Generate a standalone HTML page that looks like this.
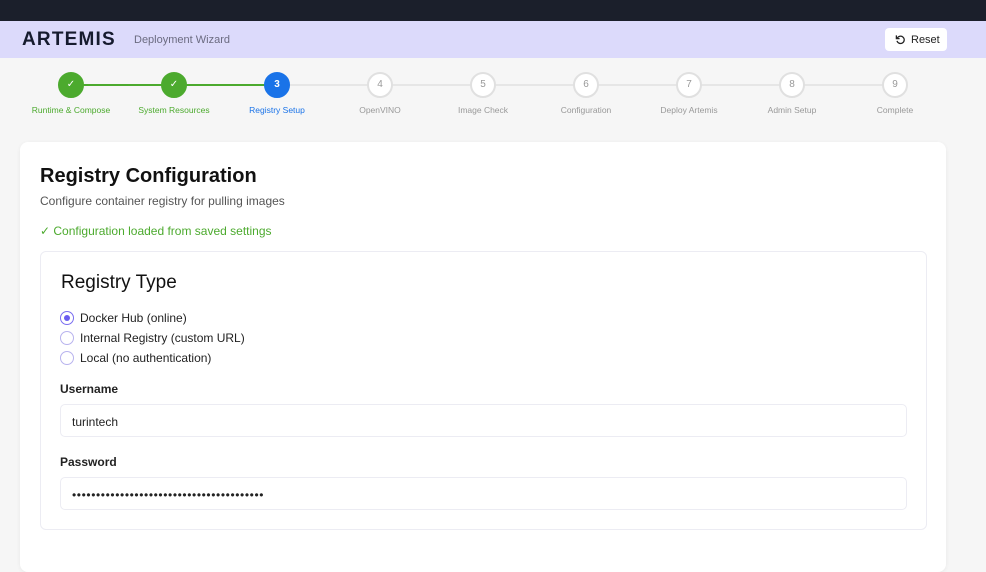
<!DOCTYPE html>
<html><head><style>
*{box-sizing:border-box;margin:0;padding:0}
body{width:986px;height:556px;overflow:hidden;background:#f6f6f6;font-family:"Liberation Sans",sans-serif;position:relative}
.top{position:absolute;left:0;top:0;width:986px;height:21px;background:#1b1f2b}
.hdr{position:absolute;left:0;top:21px;width:986px;height:37px;background:#dcdafb}
.logo{position:absolute;left:22px;top:8px;font-size:19px;font-weight:bold;letter-spacing:1.2px;color:#161b2e}
.sub{position:absolute;left:134px;top:13px;font-size:11px;color:#6b6b80}
.reset{position:absolute;left:885px;top:7px;width:62px;height:23px;background:#fff;border-radius:4px;font-size:11px;color:#222;padding:6px 0 0 26px}
.reset svg{position:absolute;left:10px;top:6px}
.line{position:absolute;top:84px;height:2px}
.c{position:absolute;top:72px;width:26px;height:26px;border-radius:50%;font-size:10px;text-align:center;line-height:22px;border:2px solid #e0e0e0;background:#fff;color:#999}
.c.g{background:#4caa2e;border-color:#4caa2e;color:#fff}
.c.b{background:#1a73e8;border-color:#1a73e8;color:#fff;font-weight:bold}
.l{position:absolute;top:105px;width:110px;margin-left:-55px;text-align:center;font-size:8.5px;color:#999}
.card{position:absolute;left:20px;top:142px;width:926px;height:430px;background:#fff;border-radius:8px;box-shadow:0 1px 4px rgba(0,0,0,.06)}
h1{position:absolute;left:40px;top:165px;font-size:20px;color:#111;font-weight:bold}
.p{position:absolute;left:40px;top:194px;font-size:12px;color:#555}
.ok{position:absolute;left:40px;top:224px;font-size:12px;color:#4caa2e}
.box{position:absolute;left:40px;top:251px;width:887px;height:279px;border:1px solid #ececf3;border-radius:6px}
h2{position:absolute;left:61px;top:272px;font-size:19px;font-weight:normal;color:#111}
.r{position:absolute;left:60px;font-size:12px;color:#222}
.r i{position:absolute;left:0;top:0;width:14px;height:14px;border:1.5px solid #b8b3ee;border-radius:50%}
.r i.on{border-color:#7a6ef0}
.r i.on:after{content:"";position:absolute;left:2.5px;top:2.5px;width:6px;height:6px;border-radius:50%;background:#6a5cf0}
.r span{position:absolute;left:20px;top:0;white-space:nowrap}
.lab{position:absolute;left:60px;font-size:12px;font-weight:bold;color:#222}
.in{position:absolute;left:60px;width:847px;height:33px;border:1px solid #ececf3;border-radius:5px;font-size:12px;color:#222;padding:10px 0 0 11px}
</style></head><body>
<div class="top"></div>
<div class="hdr"><div class="logo">ARTEMIS</div><div class="sub">Deployment Wizard</div>
<div class="reset"><svg width="11" height="11" viewBox="0 0 12 12"><path d="M2.5 4.5A4 4 0 1 1 2.2 7.5" fill="none" stroke="#222" stroke-width="1.4"/><path d="M1.5 1.5v3.5h3.5" fill="none" stroke="#222" stroke-width="1.4"/></svg>Reset</div></div>
<div class="line" style="left:71px;width:206px;background:#4caa2e"></div>
<div class="line" style="left:277px;width:618px;background:#e6e6e6"></div>
<div class="c g" style="left:58px">✓</div><div class="c g" style="left:161px">✓</div><div class="c b" style="left:264px">3</div>
<div class="c" style="left:367px">4</div><div class="c" style="left:470px">5</div><div class="c" style="left:573px">6</div><div class="c" style="left:676px">7</div><div class="c" style="left:779px">8</div><div class="c" style="left:882px">9</div>
<div class="l" style="left:71px;color:#4caa2e">Runtime &amp; Compose</div>
<div class="l" style="left:174px;color:#4caa2e">System Resources</div>
<div class="l" style="left:277px;color:#1a73e8">Registry Setup</div>
<div class="l" style="left:380px">OpenVINO</div><div class="l" style="left:483px">Image Check</div><div class="l" style="left:586px">Configuration</div><div class="l" style="left:689px">Deploy Artemis</div><div class="l" style="left:792px">Admin Setup</div><div class="l" style="left:895px">Complete</div>
<div class="card"></div>
<h1>Registry Configuration</h1>
<div class="p">Configure container registry for pulling images</div>
<div class="ok">✓ Configuration loaded from saved settings</div>
<div class="box"></div>
<h2>Registry Type</h2>
<div class="r" style="top:311px"><i class="on"></i><span>Docker Hub (online)</span></div>
<div class="r" style="top:331px"><i></i><span>Internal Registry (custom URL)</span></div>
<div class="r" style="top:351px"><i></i><span>Local (no authentication)</span></div>
<div class="lab" style="top:382px">Username</div>
<div class="in" style="top:404px">turintech</div>
<div class="lab" style="top:455px">Password</div>
<div class="in" style="top:477px;letter-spacing:0.6px">••••••••••••••••••••••••••••••••••••••••</div>
</body></html>
